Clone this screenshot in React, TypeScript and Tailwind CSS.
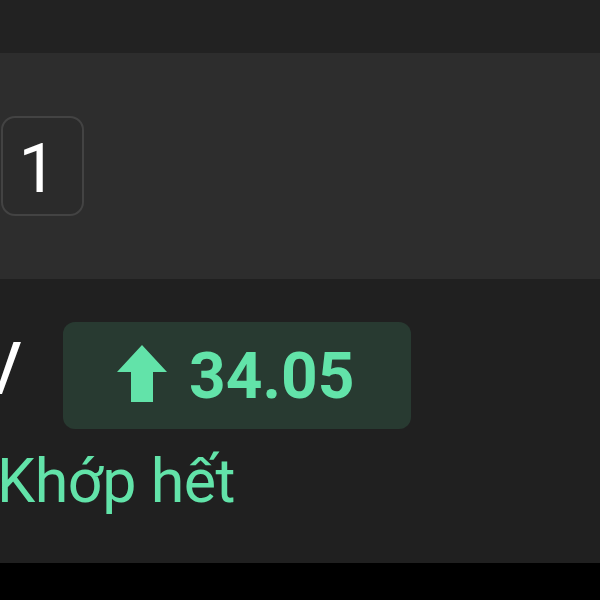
import React from "react";

export default function App() {
  return (
    <div
      className="w-[600px] h-[600px] overflow-hidden flex flex-col bg-black"
      style={{ fontFamily: "Roboto, 'Noto Sans', sans-serif" }}
    >
      <div className="h-[53px] bg-[#222222] shrink-0" />
      <div className="h-[226px] bg-[#2d2d2d] shrink-0 flex items-center pl-[1px]">
        <div className="w-[83px] h-[100px] rounded-[14px] border-2 border-[#434343] bg-[#2b2b2b] flex items-center justify-center pr-[10px] pt-[6px]">
          <span className="text-[68px] leading-none text-white font-normal">1</span>
        </div>
      </div>
      <div className="h-[284px] bg-[#202020] shrink-0 flex flex-col pt-[43px]">
        <div className="flex items-center">
          <span className="text-[72px] leading-none text-white ml-[-24px] w-[46px] mt-[-12px]">V</span>
          <div className="ml-[41px] w-[348px] h-[107px] rounded-[12px] bg-[#283a31] flex items-center pl-[54px] gap-[22px]">
            <svg width="50" height="57" viewBox="0 0 50 57" className="mt-[-4px]">
              <path d="M25 0 L50 27 L36 27 L36 57 L14 57 L14 27 L0 27 Z" fill="#62e3a9" />
            </svg>
            <span className="text-[64px] leading-none font-bold text-[#62e3a9] mt-[2px]">34.05</span>
          </div>
        </div>
        <div className="mt-[22px] text-[61px] leading-none text-[#62e3a9] ml-[-3px] tracking-[-0.5px]">Khớp hết</div>
      </div>
      <div className="flex-1 bg-black" />
    </div>
  );
}
